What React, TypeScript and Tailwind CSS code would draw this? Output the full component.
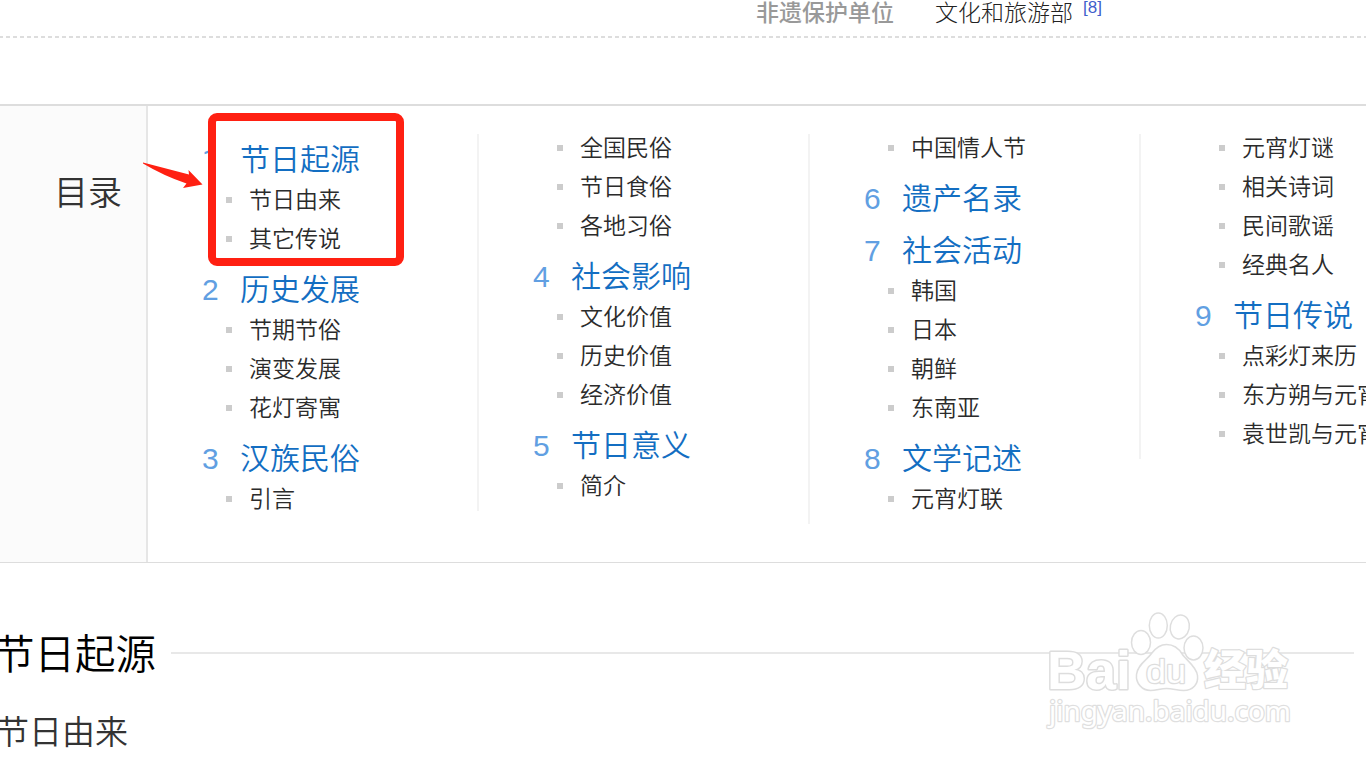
type Section = { no?: string; title?: string; items: string[] };

const columns: Section[][] = [
  [
    { no: "1", title: "节日起源", items: ["节日由来", "其它传说"] },
    { no: "2", title: "历史发展", items: ["节期节俗", "演变发展", "花灯寄寓"] },
    { no: "3", title: "汉族民俗", items: ["引言"] },
  ],
  [
    { items: ["全国民俗", "节日食俗", "各地习俗"] },
    { no: "4", title: "社会影响", items: ["文化价值", "历史价值", "经济价值"] },
    { no: "5", title: "节日意义", items: ["简介"] },
  ],
  [
    { items: ["中国情人节"] },
    { no: "6", title: "遗产名录", items: [] },
    { no: "7", title: "社会活动", items: ["韩国", "日本", "朝鲜", "东南亚"] },
    { no: "8", title: "文学记述", items: ["元宵灯联"] },
  ],
  [
    { items: ["元宵灯谜", "相关诗词", "民间歌谣", "经典名人"] },
    { no: "9", title: "节日传说", items: ["点彩灯来历", "东方朔与元宵", "袁世凯与元宵"] },
  ],
];

function Column({ sections, first }: { sections: Section[]; first: boolean }) {
  return (
    <div className={`w-[331px] shrink-0 self-start border-l-2 ${first ? "border-transparent" : "border-[#f3f3f3]"}`}>
      {sections.map((s, i) => (
        <div key={i}>
          {s.title && (
            <div className="flex h-[52px] items-start pl-[54px] whitespace-nowrap">
              <span
                className={`w-[38px] text-[30px] leading-[52px] font-normal text-[#619fe2] ${
                  s.no === "1" ? "font-['Roboto']" : "font-['Liberation_Sans']"
                }`}
              >
                {s.no}
              </span>
              <a className="text-[30px] leading-[46px] text-[#136ec2]">{s.title}</a>
            </div>
          )}
          {s.items.map((t) => (
            <div key={t} className="flex h-[39px] items-start pl-[78px] whitespace-nowrap">
              <span className="mt-[11px] h-[6px] w-[6px] shrink-0 bg-[#cccccc]" />
              <a className="ml-[17px] text-[23px] leading-[24px] text-[#2b2b2b]">{t}</a>
            </div>
          ))}
        </div>
      ))}
    </div>
  );
}

function Watermark() {
  return (
    <svg className="absolute top-[605px] left-[1040px]" width="262" height="130" viewBox="1040 605 262 130">
      <g fill="#ffffff" stroke="#dedede" strokeWidth="1.5">
        <ellipse cx="1141" cy="642.500" rx="9.500" ry="12" />
        <ellipse cx="1158.300" cy="625.500" rx="9" ry="12.500" />
        <ellipse cx="1179.800" cy="627" rx="9.500" ry="12" transform="rotate(12 1180 627)" />
        <ellipse cx="1193.500" cy="648" rx="9.500" ry="12" />
        <path d="M1166.500 644.500c-8 0-12 5-15 9-4 6-14 11-15 21-1 9 6 16 14 16 6 0 10-2 16-2s11 2 17 2c10 0 15-7 14-15-1-9-11-15-15-21-3-5-8-10-16-10z" />
      </g>
      <g fill="#ffffff" stroke="#dddddd" strokeLinejoin="round" className="[paint-order:stroke]">
        <text x="1047" y="688.500" strokeWidth="3" textLength="84" lengthAdjust="spacingAndGlyphs" className="font-['Liberation_Sans'] text-[54px] font-bold">Bai</text>
        <text x="1146" y="682.500" strokeWidth="2.500" textLength="40" lengthAdjust="spacingAndGlyphs" className="font-['Liberation_Sans'] text-[33px] font-normal">du</text>
        <text x="1204" y="685" strokeWidth="2.500" textLength="84" lengthAdjust="spacingAndGlyphs" className="font-['Noto_Sans_CJK_SC'] text-[42px] font-black">经验</text>
        <text x="1049" y="721" strokeWidth="2.500" stroke="#dfdfdf" textLength="242" lengthAdjust="spacingAndGlyphs" className="font-['Noto_Sans'] text-[27px] font-normal">jingyan.baidu.com</text>
      </g>
    </svg>
  );
}

export default function App() {
  return (
    <div className="relative h-[759px] w-[1366px] overflow-hidden bg-white font-['Noto_Sans_CJK_SC',sans-serif] font-[350]">
      <header className="flex h-[36px] items-start pl-[756px] text-[23px] leading-[22px] whitespace-nowrap">
        <span className="w-[179px] font-medium text-[#999999]">非遗保护单位</span>
        <span className="font-light text-[#222222]">文化和旅游部</span>
        <span className="ml-[10px] font-['Liberation_Sans'] text-[17px] leading-[15px] font-normal text-[#3f5fcc]">[8]</span>
      </header>
      <div className="h-[2px] bg-[repeating-linear-gradient(90deg,#dddddd_0px,#dddddd_4px,transparent_4px,transparent_7px)] bg-position-[-1px_0px]" />

      <nav className="mt-[66px] flex h-[459px] border-t-2 border-b border-t-[#dddddd] border-b-[#dddddd]">
        <div className="w-[148px] shrink-0 border-r-2 border-[#e6e6e6] bg-[#fbfbfb] pt-[60px] pl-[54px] text-[34px] leading-[50px] text-[#333333]">
          目录
        </div>
        <div className="-ml-[2px] flex pt-[28px]">
          {columns.map((c, i) => (
            <Column key={i} sections={c} first={i === 0} />
          ))}
        </div>
      </nav>

      <main>
        <div className="mt-[60px] -ml-[6px] flex h-[60px] items-center">
          <h2 className="-mt-[2px] text-[40.500px] leading-[60px] text-black">节日起源</h2>
          <span className="ml-[15px] h-[2px] w-[1183px] bg-[#e8e8e8]" />
        </div>
        <h3 className="mt-[22px] -ml-[4px] text-[33px] leading-[50px] text-[#333333]">节日由来</h3>
      </main>

      <Watermark />

      <div className="absolute top-[113px] left-[208px] h-[153px] w-[196px] rounded-[9px] border-[8px] border-[#ff2012]" />
      <svg className="absolute top-[155px] left-[140px]" width="70" height="40" viewBox="140 155 70 40">
        <path d="M143 162.500L189 174.500L188.500 170L202.500 184.500L183 188L186.500 183.500Q164 176 143 163.500Z" fill="#ff2012" />
      </svg>
    </div>
  );
}
